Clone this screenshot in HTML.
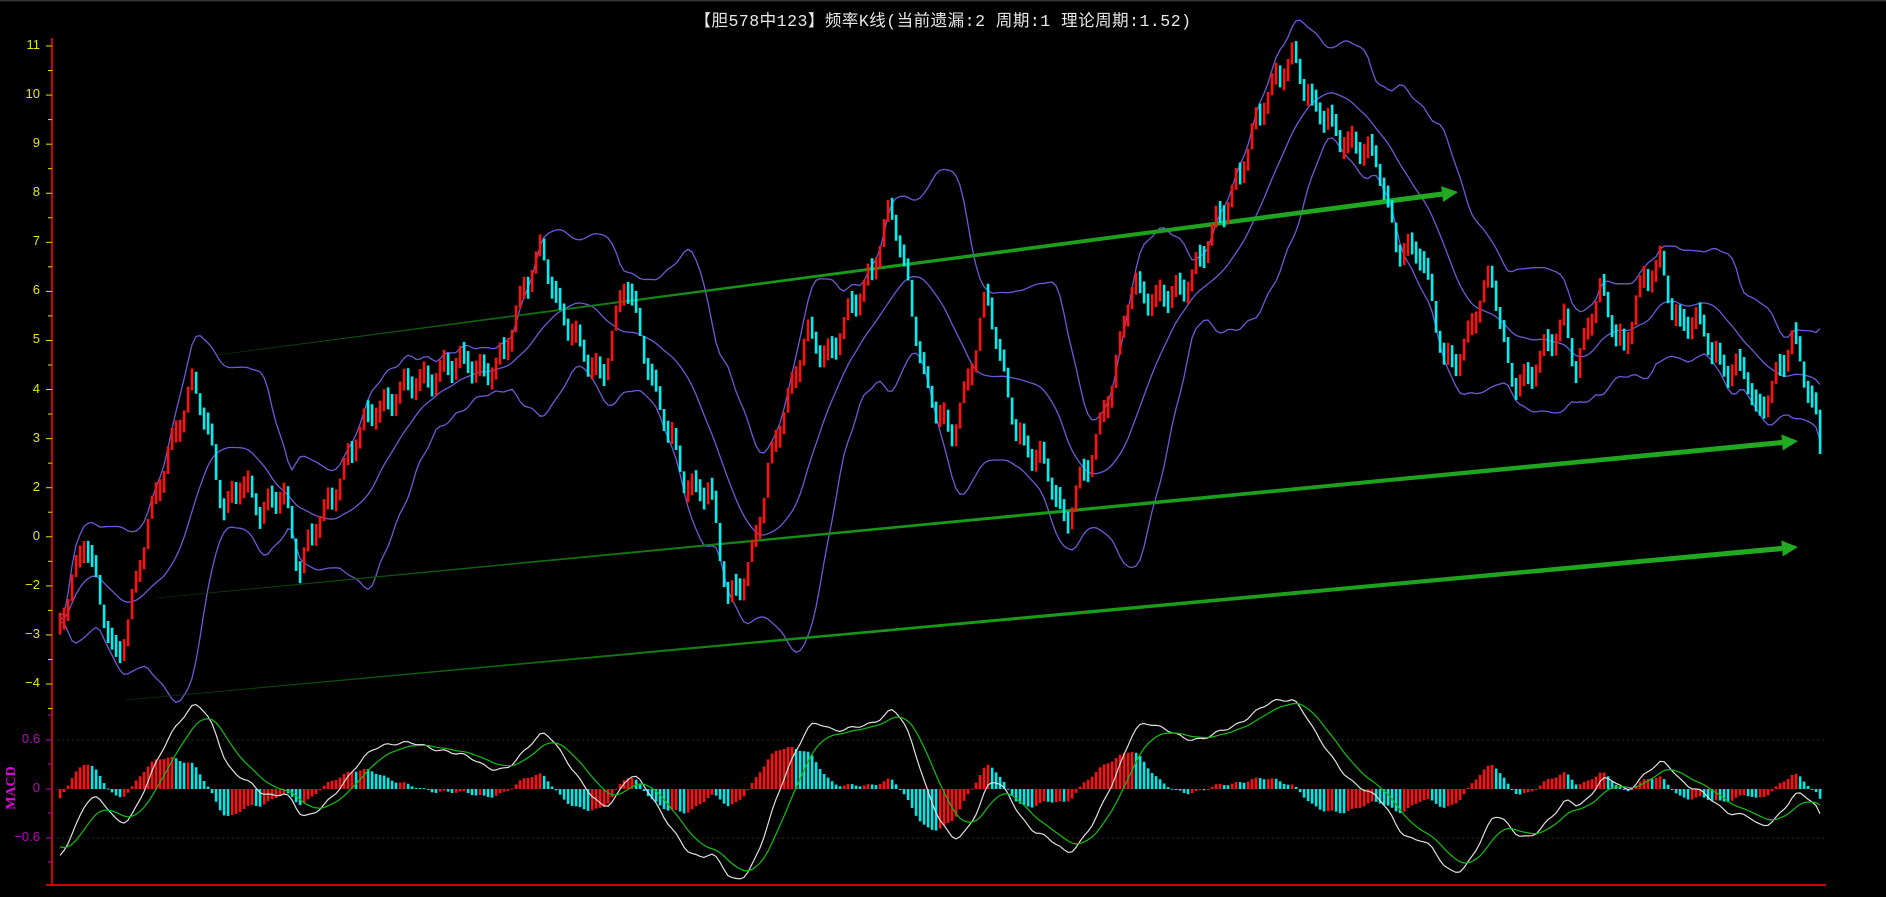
<!DOCTYPE html>
<html><head><meta charset="utf-8">
<style>
html,body{margin:0;padding:0;background:#000;width:1886px;height:897px;overflow:hidden}
#t{position:absolute;left:0;width:1886px;top:7px;text-align:center;color:#e8e8e8;font:16.5px "Liberation Mono","Noto Sans CJK SC",monospace;letter-spacing:0.5px}
svg{position:absolute;left:0;top:0}
.yl{position:absolute;color:#e6e600;font:13px "Liberation Sans",sans-serif;text-align:right;width:40px;left:0}
.ml{position:absolute;color:#c000c0;font:13px "Liberation Sans",sans-serif;text-align:right;width:40px;left:0}
#macd{position:absolute;left:-10px;top:780px;color:#e000e0;font:bold 14px "Liberation Serif",serif;transform:rotate(-90deg);transform-origin:center;width:44px;text-align:center}
</style></head><body>
<div id="t">【胆578中123】频率K线(当前遗漏:2 周期:1 理论周期:1.52)</div>
<div id="labels"></div>
<div id="macd">MACD</div>
<svg id="s" width="1886" height="897" xmlns="http://www.w3.org/2000/svg"></svg>
<script>
const S=1.203;
const K=[[50,510],[60,480],[70,450],[80,490],[95,545],[105,520],[125,430],[140,370],[160,320],[175,370],[185,420],[200,400],[215,430],[235,400],[248,480],[265,430],[285,390],[310,340],[330,325],[350,320],[370,300],[400,310],[420,290],[440,230],[450,200],[465,260],[480,290],[500,310],[520,235],[535,290],[550,340],[570,410],[590,400],[605,505],[620,480],[640,380],[660,320],[670,270],[690,300],[710,250],[725,220],[740,175],[755,240],[770,320],[790,370],[805,310],[820,240],[830,300],[845,360],[865,380],[885,440],[895,400],[910,370],[925,320],[940,230],[960,255],[980,240],[1000,210],[1020,170],[1040,110],[1060,70],[1075,40],[1090,90],[1110,110],[1130,120],[1145,140],[1160,200],[1180,210],[1200,300],[1215,290],[1240,230],[1255,310],[1270,320],[1300,260],[1310,310],[1330,240],[1350,290],[1360,250],[1380,215],[1395,270],[1410,270],[1430,300],[1450,310],[1460,350],[1475,310],[1490,280],[1500,320],[1510,350],[1515,390]].map(p=>[p[0]*S,p[1]*S]);
function interp(x){for(let j=0;j<K.length-1;j++){if(x>=K[j][0]&&x<=K[j+1][0]){const t=(x-K[j][0])/(K[j+1][0]-K[j][0]);return K[j][1]+t*(K[j+1][1]-K[j][1]);}}return x<K[0][0]?K[0][1]:K[K.length-1][1];}
const x0=60,dx=4,N=Math.floor((1820-x0)/dx)+1;
const C=[];for(let i=0;i<N;i++){const x=x0+i*dx;C.push(interp(x)+11*Math.sin(i*1.3)+6*Math.sin(i*0.47+1));}
let g='';
g+='<line x1="0" y1="0.5" x2="1886" y2="0.5" stroke="#333" stroke-width="2"/>';
g+='<line x1="52" y1="38" x2="52" y2="886" stroke="#d00000" stroke-width="2"/>';
g+='<line x1="46" y1="885" x2="1826" y2="885" stroke="#d00000" stroke-width="2"/>';
g+='<line x1="52" y1="740" x2="1826" y2="740" stroke="#2a2a2a" stroke-dasharray="2,3"/>';
g+='<line x1="52" y1="838" x2="1826" y2="838" stroke="#2a2a2a" stroke-dasharray="2,3"/>';
const labs=['11','10','9','8','7','6','5','4','3','2','0','-2','-3','-4'];
let L='';
labs.forEach((v,k)=>{const y=46+k*49.08;g+=`<line x1="46" y1="${y}" x2="52" y2="${y}" stroke="#e6e600"/>`;g+=`<line x1="48" y1="${y+24.5}" x2="52" y2="${y+24.5}" stroke="#e6e600"/>`;L+=`<div class="yl" style="top:${y-9}px">${v.replace('-','−')}</div>`;});
[[740,'0.6'],[789,'0'],[838,'−0.6']].forEach(a=>{g+=`<line x1="46" y1="${a[0]}" x2="52" y2="${a[0]}" stroke="#c000c0"/>`;L+=`<div class="ml" style="top:${a[0]-9}px">${a[1]}</div>`;});
[715,764,813,862].forEach(y=>{g+=`<line x1="48" y1="${y}" x2="52" y2="${y}" stroke="#c000c0"/>`});
document.getElementById('labels').innerHTML=L;
function arrow(x1,y1,x2,y2){const a=Math.atan2(y2-y1,x2-x1),c=Math.cos(a),s=Math.sin(a),nx=-s,ny=c;const hl=16,hw=8;const bx=x2-hl*c,by=y2-hl*s;const w0=0.3,w1=2.6;
g+=`<polygon points="${x1+nx*w0},${y1+ny*w0} ${bx+nx*w1},${by+ny*w1} ${bx-nx*w1},${by-ny*w1} ${x1-nx*w0},${y1-ny*w0}" fill="url(#gr)"/>`;
g+=`<polygon points="${x2},${y2} ${bx+nx*hw},${by+ny*hw} ${bx-nx*hw},${by-ny*hw}" fill="#22aa22"/>`;}
g='<defs><linearGradient id="gr" x1="0" x2="1"><stop offset="0" stop-color="#083808"/><stop offset="0.45" stop-color="#189818"/><stop offset="1" stop-color="#22aa22"/></linearGradient></defs>'+g;
const up=[],md=[],lo=[];
for(let i=0;i<N;i++){const a=Math.max(0,i-19);let s=0,n=0;for(let j=a;j<=i;j++){s+=C[j];n++;}const m=s/n;let v=0;for(let j=a;j<=i;j++)v+=(C[j]-m)**2;const sd=Math.sqrt(v/n);md.push(m);up.push(m-1.85*sd-4);lo.push(m+1.85*sd+4);}
const pl=(arr,col,w)=>{let d='';arr.forEach((y,i)=>{d+=(i?'L':'M')+(x0+i*dx).toFixed(1)+','+y.toFixed(1)});g+=`<path d="${d}" fill="none" stroke="${col}" stroke-width="${w}"/>`;};
pl(up,'#6a5ad8',1.3);pl(md,'#6a5ad8',1.3);pl(lo,'#6a5ad8',1.3);
arrow(217,355,1458,192);arrow(156,598,1798,441);arrow(126,700,1798,547);
for(let i=0;i<N;i++){const p=i?C[i-1]:C[i]+10;let a=Math.min(p,C[i]),b=Math.max(p,C[i]);if(b-a<22){const m=(a+b)/2;a=m-11;b=m+11;}const col=C[i]<p?'#ff1010':'#00f0f0';g+=`<rect x="${x0+i*dx-1.2}" y="${a}" width="2.6" height="${b-a}" fill="${col}"/>`;}
const P=C.map(y=>-y/49);let e12=P[0],e26=P[0]+0.9,dea=-0.7;const D=[],E=[],H=[];
P.forEach(p=>{e12=e12+(p-e12)*2/13;e26=e26+(p-e26)*2/27;const d=e12-e26;dea=dea+(d-dea)*2/10;D.push(d);E.push(dea);H.push(2*(d-dea));});
let mx=0;D.forEach(d=>mx=Math.max(mx,Math.abs(d)));const k=1.1/mx*81.7;
let mh=0;H.forEach(h=>mh=Math.max(mh,Math.abs(h)));const kh=42/mh;
H.forEach((h,i)=>{const col=(i&&h<H[i-1])?'#00e8e8':'#ff1010';const y=789-h*kh;g+=`<rect x="${x0+i*dx-1.2}" y="${Math.min(y,789)}" width="2.6" height="${Math.max(1,Math.abs(h*kh))}" fill="${col}"/>`;});
pl(D.map(d=>789-d*k),'#e0e0e0',1.2);pl(E.map(d=>789-d*k),'#10c010',1.2);
document.getElementById('s').innerHTML=g;
</script>
</body></html>
